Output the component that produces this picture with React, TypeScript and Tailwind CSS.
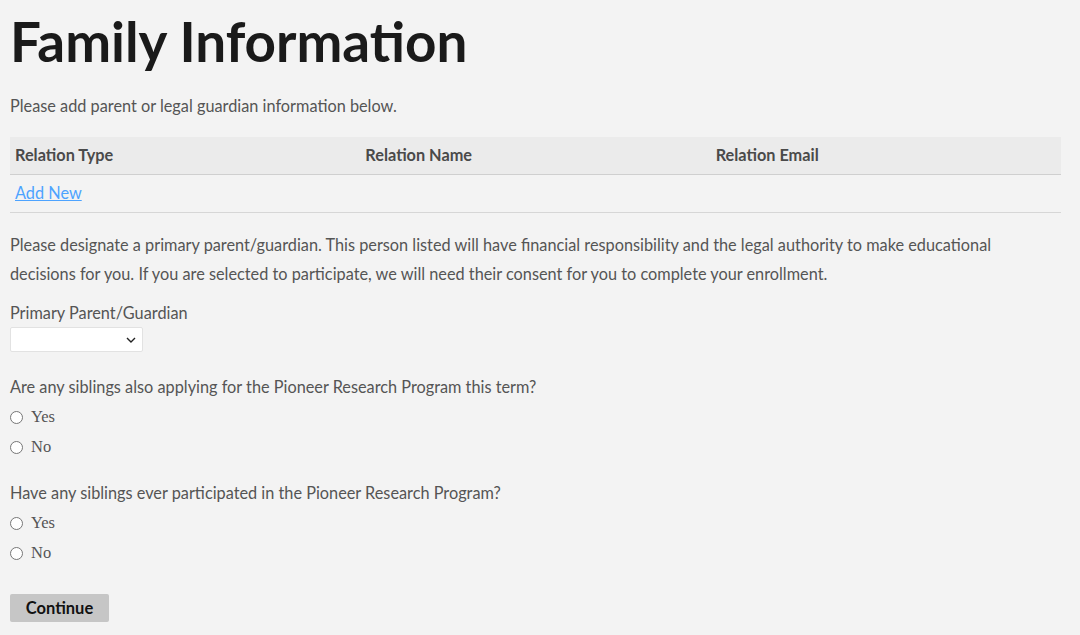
import React from "react";

const body = { fontFamily: "Lato, 'Noto Sans', sans-serif" };

function Radio({ label, name }: { label: string; name: string }) {
  return (
    <label className="flex items-center h-[30px] gap-[8px]">
      <span className="w-[13px] h-[13px] rounded-full border border-[#767676] bg-white shrink-0" />
      <span className="text-[16.5px] text-[#555]" style={{ fontFamily: "'Liberation Serif', serif" }}>
        {label}
      </span>
      <input type="radio" name={name} className="hidden" />
    </label>
  );
}

export default function App() {
  return (
    <div className="min-h-[635px] bg-[#f3f3f3]" style={body}>
      <div className="pl-[10px] w-[1061px]">
        <h1
          className="text-[54.8px] leading-none font-bold text-[#1a1a1a] pt-[14px] h-[76px]"
          style={{ fontFamily: "Lato, sans-serif" }}
        >
          Family Information
        </h1>
        <p className="text-[16.3px] text-[#555] mt-[19px] leading-[22px]">
          Please add parent or legal guardian information below.
        </p>
        <div className="mt-[20px]">
          <div className="grid grid-cols-3 bg-[#ebebeb] h-[38px] items-center border-b border-[#cfcfcf] text-[16.3px] font-bold text-[#4a4a4a]">
            <div className="px-[5px]">Relation Type</div>
            <div className="px-[5px]">Relation Name</div>
            <div className="px-[5px]">Relation Email</div>
          </div>
          <div className="h-[38px] flex items-center border-b border-[#d6d6d6] px-[5px]">
            <a href="#" className="text-[16.3px] text-[#4da3ff] underline">
              Add New
            </a>
          </div>
        </div>
        <p className="text-[16.3px] text-[#555] leading-[29px] mt-[17px] pr-[10px]">
          Please designate a primary parent/guardian. This person listed will have financial responsibility and the
          legal authority to make educational decisions for you. If you are selected to participate, we will need their
          consent for you to complete your enrollment.
        </p>
        <div className="mt-[10px] text-[16.3px] text-[#555] leading-[29px]">Primary Parent/Guardian</div>
        <div className="w-[133px] h-[25px] bg-white border border-[#e2e2e2] rounded-[2px] flex items-center justify-end pr-[6px]">
          <svg width="10" height="6" viewBox="0 0 10 6" fill="none">
            <path d="M1 1l4 4 4-4" stroke="#222" strokeWidth="1.4" />
          </svg>
        </div>
        <div className="mt-[19px] text-[16.3px] text-[#555] leading-[31px]">
          Are any siblings also applying for the Pioneer Research Program this term?
        </div>
        <Radio label="Yes" name="a" />
        <Radio label="No" name="a" />
        <div className="mt-[15px] text-[16.3px] text-[#555] leading-[31px]">
          Have any siblings ever participated in the Pioneer Research Program?
        </div>
        <Radio label="Yes" name="b" />
        <Radio label="No" name="b" />
        <button className="mt-[26px] w-[99px] h-[28px] bg-[#c6c6c6] rounded-[2px] text-[16.5px] font-bold text-[#111]">
          Continue
        </button>
      </div>
    </div>
  );
}
